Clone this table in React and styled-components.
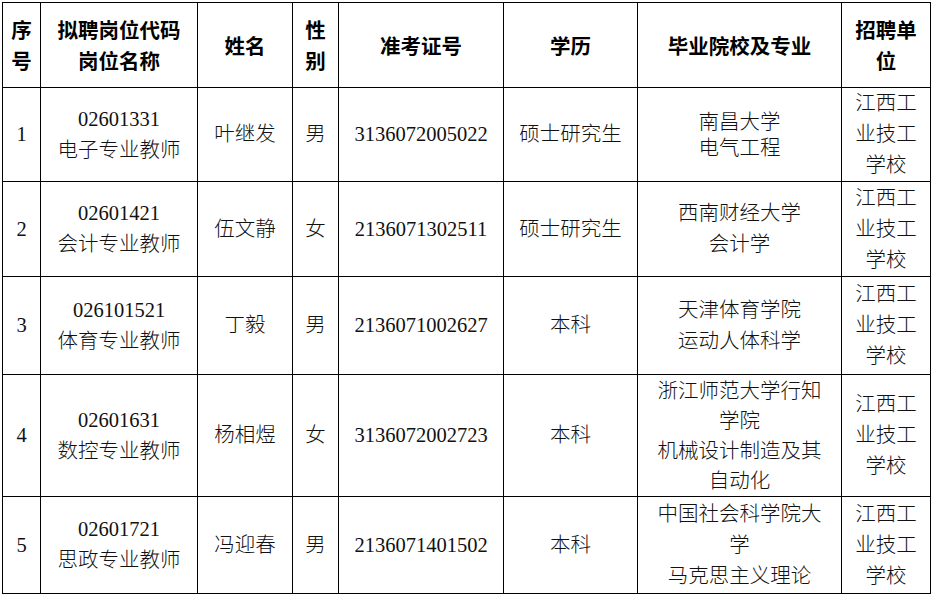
import React from "react";
import styled, { createGlobalStyle } from "styled-components";

const GlobalStyle = createGlobalStyle`
  html, body {
    margin: 0;
    padding: 0;
    background: #ffffff;
  }
  body {
    font-family: "Liberation Serif", "Noto Sans CJK SC", serif;
  }
`;

const Page = styled.div`
  padding: 2px 0 0 2px;
`;

const Sheet = styled.div`
  display: grid;
  grid-template-columns: 37px 156px 94px 45px 164px 133px 203px 88px;
  grid-template-rows: 84px 93px 94px 97px 121px 96px;
  gap: 1px;
  padding: 1px;
  width: max-content;
  background: #000000;
`;

const Cell = styled.div`
  display: flex;
  flex-direction: column;
  align-items: center;
  justify-content: center;
  background: #ffffff;
  color: #111111;
  font-size: 20.5px;
  line-height: ${(p) => p.$lh || 31}px;
  font-weight: 300;
  text-align: center;
  white-space: nowrap;
  overflow: hidden;
`;

const HeadCell = styled(Cell)`
  color: #000000;
  font-weight: 700;
  font-family: "Noto Sans CJK SC", sans-serif;
  line-height: 31px;
`;

const Line = styled.span`
  display: block;
`;

const headers = [
  ["序", "号"],
  ["拟聘岗位代码", "岗位名称"],
  ["姓名"],
  ["性", "别"],
  ["准考证号"],
  ["学历"],
  ["毕业院校及专业"],
  ["招聘单", "位"],
];

const unit = ["江西工", "业技工", "学校"];

const rows = [
  {
    no: "1",
    post: ["02601331", "电子专业教师"],
    name: "叶继发",
    sex: "男",
    ticket: "3136072005022",
    degree: "硕士研究生",
    school: ["南昌大学", "电气工程"],
    lh: 26,
  },
  {
    no: "2",
    post: ["02601421", "会计专业教师"],
    name: "伍文静",
    sex: "女",
    ticket: "2136071302511",
    degree: "硕士研究生",
    school: ["西南财经大学", "会计学"],
  },
  {
    no: "3",
    post: ["026101521", "体育专业教师"],
    name: "丁毅",
    sex: "男",
    ticket: "2136071002627",
    degree: "本科",
    school: ["天津体育学院", "运动人体科学"],
  },
  {
    no: "4",
    post: ["02601631", "数控专业教师"],
    name: "杨相煜",
    sex: "女",
    ticket: "3136072002723",
    degree: "本科",
    school: ["浙江师范大学行知", "学院", "机械设计制造及其", "自动化"],
    lh: 30,
  },
  {
    no: "5",
    post: ["02601721", "思政专业教师"],
    name: "冯迎春",
    sex: "男",
    ticket: "2136071401502",
    degree: "本科",
    school: ["中国社会科学院大", "学", "马克思主义理论"],
  },
];

const Lines = ({ items }) =>
  items.map((text, i) => <Line key={i}>{text}</Line>);

const App = () => (
  <>
    <GlobalStyle />
    <Page>
      <Sheet>
        {headers.map((h, i) => (
          <HeadCell key={`h${i}`}>
            <Lines items={h} />
          </HeadCell>
        ))}
        {rows.map((r) => (
          <React.Fragment key={r.no}>
            <Cell>{r.no}</Cell>
            <Cell>
              <Lines items={r.post} />
            </Cell>
            <Cell>{r.name}</Cell>
            <Cell>{r.sex}</Cell>
            <Cell>{r.ticket}</Cell>
            <Cell>{r.degree}</Cell>
            <Cell $lh={r.lh}>
              <Lines items={r.school} />
            </Cell>
            <Cell>
              <Lines items={unit} />
            </Cell>
          </React.Fragment>
        ))}
      </Sheet>
    </Page>
  </>
);

export default App;
